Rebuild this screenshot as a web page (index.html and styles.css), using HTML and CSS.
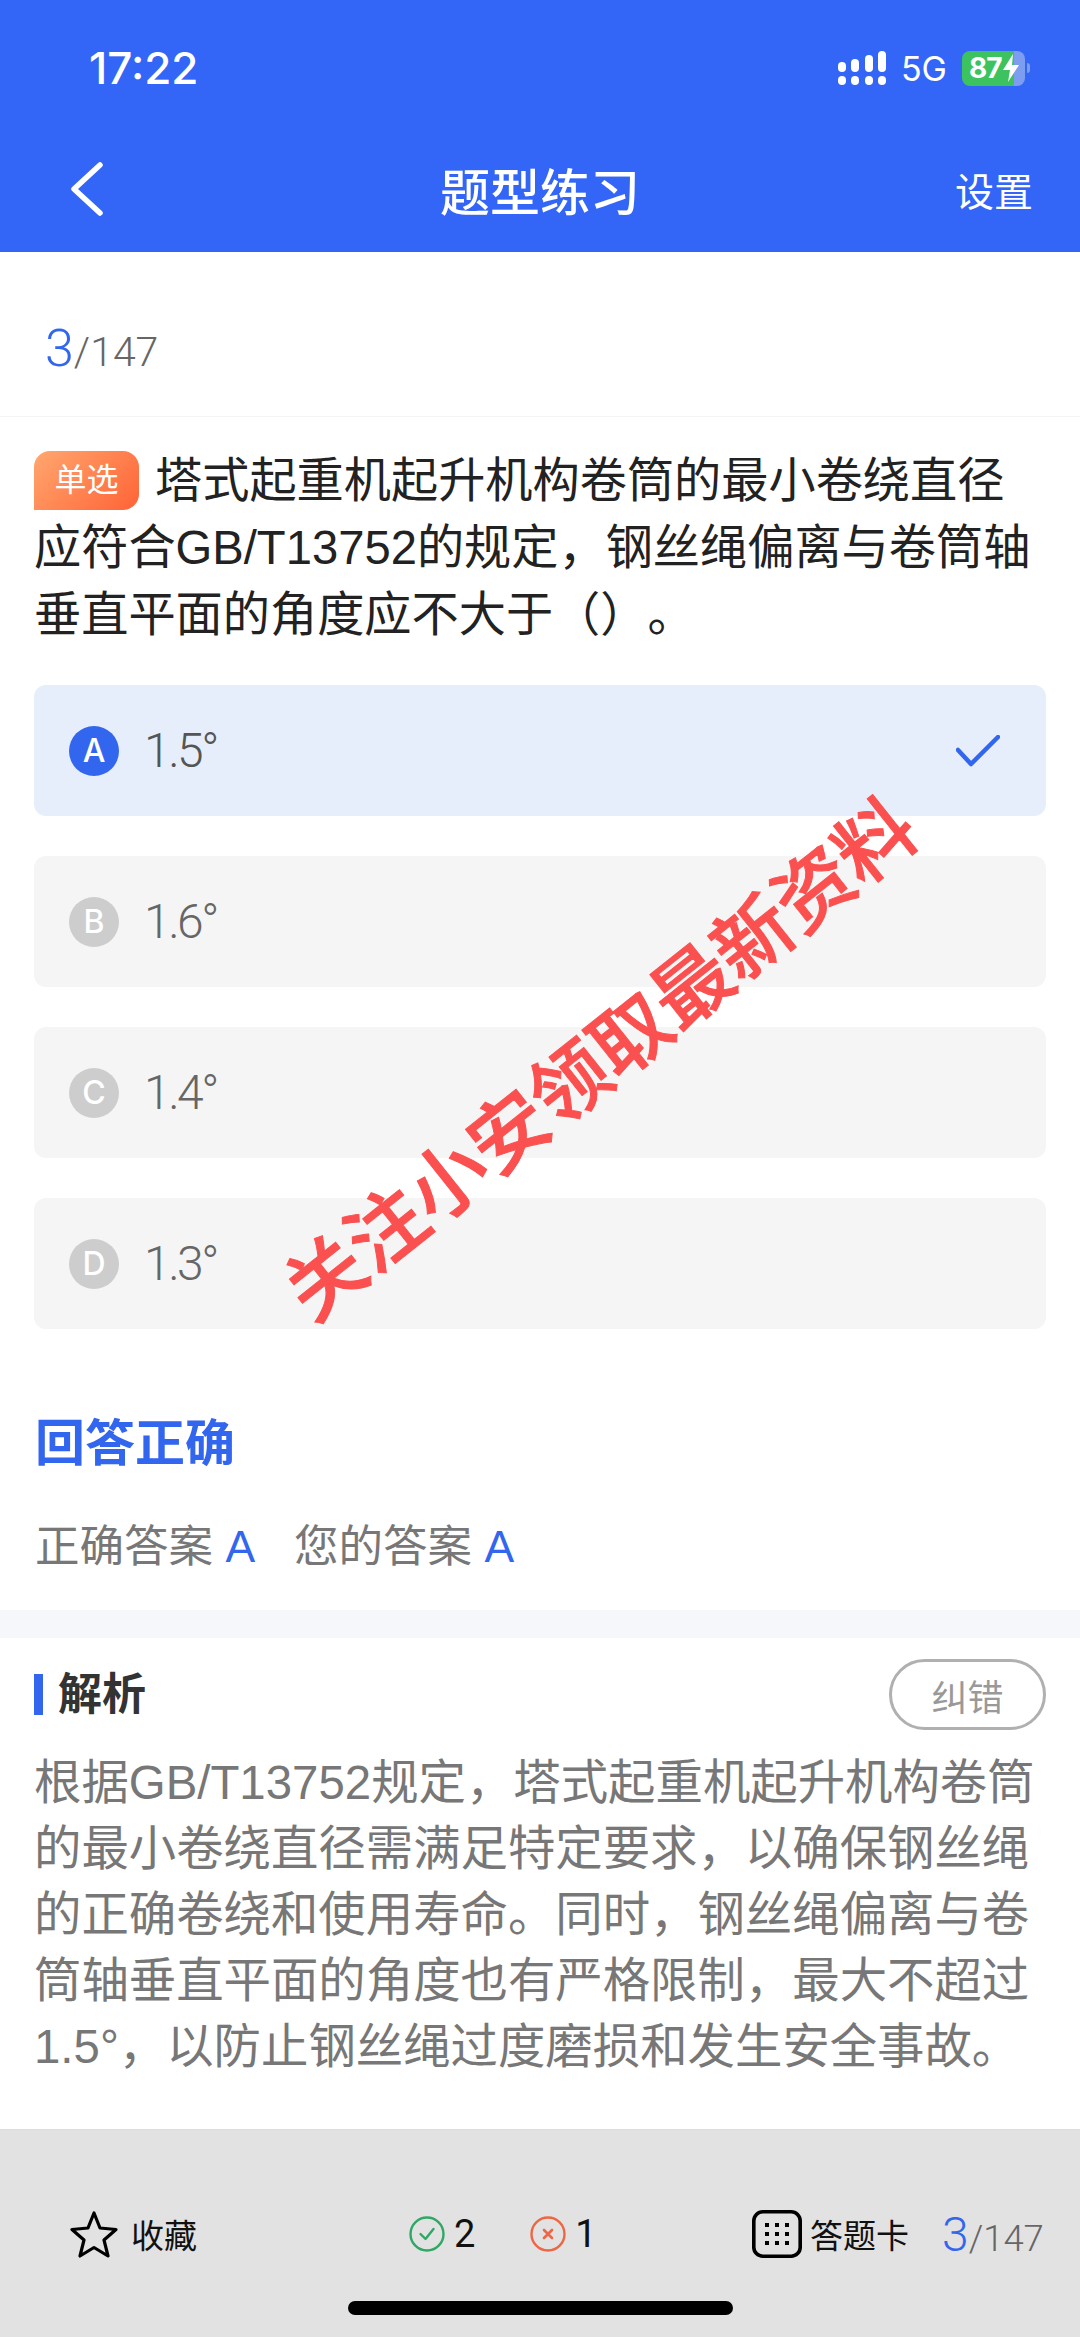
FILE: index.html
```html
<!DOCTYPE html>
<html lang="zh-CN">
<head>
  <meta charset="utf-8">
  <title>题型练习</title>
  <link rel="stylesheet" href="styles.css">
</head>
<body>
  <header class="top">
    <div class="status">
      <span class="time">17:22</span>
      <div class="status-right">
        <svg class="signal" width="48" height="34" viewBox="0 0 48 34" fill="#fff">
          <rect x="0" y="11" width="8" height="10" rx="4"/><rect x="13" y="8" width="8" height="13" rx="4"/><rect x="27" y="4" width="8" height="17" rx="4"/><rect x="40" y="0" width="8" height="21" rx="4"/>
          <rect x="0" y="25" width="8" height="9" rx="4"/><rect x="13" y="25" width="8" height="9" rx="4"/><rect x="27" y="25" width="8" height="9" rx="4"/><rect x="40" y="25" width="8" height="9" rx="4"/>
        </svg>
        <span class="net">5G</span>
        <div class="battery">
          <div class="battery-body">
            <span class="battery-num">87</span>
            <svg width="16" height="28" viewBox="0 0 16 28" fill="#fff"><path d="M10 0 L0 16 H7 L5 28 L16 11 H9 Z"/></svg>
          </div>
          <span class="battery-tip"></span>
        </div>
      </div>
    </div>
    <nav class="nav">
      <svg class="back" width="34" height="54" viewBox="0 0 34 54" fill="none" stroke="#fff" stroke-width="5.5" stroke-linecap="round" stroke-linejoin="round"><path d="M30 3 L4 27 L30 51"/></svg>
      <h1 class="nav-title">题型练习</h1>
      <span class="nav-set">设置</span>
    </nav>
  </header>

  <main class="content">
    <div class="counter"><span class="cur">3</span><span class="total">/147</span></div>

    <p class="question"><span class="tag">单选</span>塔式起重机起升机构卷筒的最小卷绕直径应符合GB/T13752的规定，钢丝绳偏离与卷筒轴垂直平面的角度应不大于（）。</p>

    <ul class="options">
      <li class="option picked">
        <span class="badge">A</span><span class="opt-text">1.5°</span>
        <svg class="tick" width="44" height="32" viewBox="0 0 44 32" fill="none" stroke="#3366ee" stroke-width="4.5" stroke-linecap="round" stroke-linejoin="round"><path d="M2 15 L15 29 L42 2"/></svg>
      </li>
      <li class="option"><span class="badge">B</span><span class="opt-text">1.6°</span></li>
      <li class="option"><span class="badge">C</span><span class="opt-text">1.4°</span></li>
      <li class="option"><span class="badge">D</span><span class="opt-text">1.3°</span></li>
    </ul>

    <section class="result">
      <h2 class="result-title">回答正确</h2>
      <p class="result-line">正确答案 <b>A</b><span class="mine">您的答案 <b>A</b></span></p>
    </section>

    <div class="band"></div>

    <section class="analysis">
      <div class="analysis-head">
        <h3 class="analysis-title">解析</h3>
        <span class="report">纠错</span>
      </div>
      <p class="analysis-text">根据GB/T13752规定，塔式起重机起升机构卷筒的最小卷绕直径需满足特定要求，以确保钢丝绳的正确卷绕和使用寿命。同时，钢丝绳偏离与卷筒轴垂直平面的角度也有严格限制，最大不超过1.5°，以防止钢丝绳过度磨损和发生安全事故。</p>
    </section>
  </main>

  <footer class="bottom">
    <div class="bottom-row">
      <div class="fav">
        <svg width="48" height="48" viewBox="0 0 48 48" fill="none" stroke="#000" stroke-width="3.2" stroke-linejoin="round"><path d="M24 3 L30 18 L46 19.5 L34 30 L38 46 L24 37.5 L10 46 L14 30 L2 19.5 L18 18 Z"/></svg>
        <span>收藏</span>
      </div>
      <div class="score">
        <svg width="36" height="36" viewBox="0 0 36 36" fill="none" stroke="#2fa865" stroke-width="2.4" stroke-linecap="round" stroke-linejoin="round"><circle cx="18" cy="18" r="16.5"/><path d="M11.5 18 L16.5 23 L24.5 13"/></svg>
        <span class="score-num">2</span>
        <svg class="score-x" width="36" height="36" viewBox="0 0 36 36" fill="none" stroke="#ee6644" stroke-width="2.4" stroke-linecap="round"><circle cx="18" cy="18" r="16.5"/><path d="M14 14 L22 22 M22 14 L14 22" stroke-width="2.6"/></svg>
        <span class="score-num">1</span>
      </div>
      <div class="card">
        <svg width="50" height="48" viewBox="0 0 50 48" fill="#000"><rect x="1.8" y="1.8" width="46.4" height="44.4" rx="9" fill="none" stroke="#000" stroke-width="3.6"/>
          <rect x="13" y="13" width="4" height="4"/><rect x="23" y="13" width="4" height="4"/><rect x="33" y="13" width="4" height="4"/>
          <rect x="13" y="22" width="4" height="4"/><rect x="23" y="22" width="4" height="4"/><rect x="33" y="22" width="4" height="4"/>
          <rect x="13" y="31" width="4" height="4"/><rect x="23" y="31" width="4" height="4"/><rect x="33" y="31" width="4" height="4"/></svg>
        <span>答题卡</span>
      </div>
      <div class="counter-small"><span class="cur">3</span><span class="total">/147</span></div>
    </div>
    <div class="home-bar"></div>
  </footer>

  <div class="watermark">关注小安领取最新资料</div>
</body>
</html>
```
FILE: styles.css
```css
* {
  box-sizing: border-box;
}

body {
  position: relative;
  display: flex;
  flex-direction: column;
  width: 1080px;
  height: 2337px;
  margin: 0;
  overflow: hidden;
  background: #fff;
  font-family: "Liberation Sans", "Noto Sans CJK SC", sans-serif;
  text-spacing-trim: space-all;
}

h1, h2, h3, p, ul {
  margin: 0;
  padding: 0;
}

/* header */
.top {
  height: 252px;
  background: #3366f6;
  color: #fff;
}

.status {
  display: flex;
  justify-content: space-between;
  align-items: center;
  height: 136px;
  padding: 0 50px 0 89px;
}

.time {
  font-family: Inter, sans-serif;
  font-size: 44px;
  font-weight: 500;
}

.status-right {
  display: flex;
  align-items: center;
}

.net {
  margin: 0 15px;
  font-family: Inter, sans-serif;
  font-size: 34px;
}

.battery {
  display: flex;
  align-items: center;
}

.battery-body {
  display: flex;
  align-items: center;
  gap: 1px;
  width: 63px;
  height: 35px;
  padding-left: 7px;
  border-radius: 8px;
  background: linear-gradient(90deg, #3cc35f 0, #3cc35f 83%, #7c9df0 83%);
}

.battery-num {
  font-family: Inter, sans-serif;
  font-size: 28px;
  font-weight: 700;
  letter-spacing: -1px;
}

.battery-tip {
  width: 3px;
  height: 10px;
  margin-left: 2px;
  border-radius: 0 3px 3px 0;
  background: #7c9df0;
}

.nav {
  display: flex;
  justify-content: space-between;
  align-items: center;
  position: relative;
  height: 106px;
  padding: 0 47px 0 70px;
}

.nav-title {
  position: absolute;
  left: 0;
  right: 0;
  text-align: center;
  font-size: 50px;
  font-weight: 500;
}

.nav-set {
  font-size: 39px;
}

/* question */
.content {
  flex: 1;
}

.counter {
  display: flex;
  align-items: baseline;
  height: 165px;
  padding: 66px 34px 0 45px;
  border-bottom: 1px solid #f5f5f5;
  font-family: Roboto, sans-serif;
  font-weight: 300;
}

.cur {
  color: #3366ee;
}

.total {
  color: #666;
}

.counter .cur {
  font-size: 52px;
}

.counter .total {
  font-size: 41px;
}

.question {
  padding: 30px 34px 0;
  font-size: 47.2px;
  line-height: 67px;
  color: #222;
}

.tag {
  display: inline-flex;
  justify-content: center;
  align-items: center;
  width: 105px;
  height: 59px;
  margin-right: 16px;
  border-radius: 16px 16px 16px 0;
  background: linear-gradient(135deg, #ffa76f, #ff6336);
  color: #fff;
  font-size: 32px;
  vertical-align: 6px;
  line-height: 59px;
}

.options {
  display: flex;
  flex-direction: column;
  gap: 40px;
  margin-top: 37px;
  padding: 0 34px;
  list-style: none;
}

.option {
  display: flex;
  align-items: center;
  height: 131px;
  padding: 0 46px 0 35px;
  border-radius: 12px;
  background: #f5f5f5;
  color: #666;
}

.option.picked {
  background: #e7eefb;
  color: #555;
}

.badge {
  display: flex;
  justify-content: center;
  align-items: center;
  width: 50px;
  height: 50px;
  margin-right: 25px;
  border-radius: 50%;
  background: #cdcdcd;
  color: #fff;
  font-family: Inter, sans-serif;
  font-size: 32px;
  font-weight: 500;
}

.picked .badge {
  background: #3366ee;
}

.opt-text {
  font-family: Roboto, sans-serif;
  font-size: 48px;
  font-weight: 300;
  letter-spacing: -2.5px;
}

.tick {
  margin-left: auto;
}

/* answer */
.result {
  height: 281px;
  padding: 79px 34px 0 35px;
}

.result-title {
  font-size: 50px;
  font-weight: 700;
  color: #3366ee;
  line-height: 72px;
}

.result-line {
  margin-top: 37px;
  font-size: 44.5px;
  line-height: 60px;
  color: #777;
}

.result-line b {
  font-weight: 400;
  color: #3366ee;
}

.mine {
  margin-left: 39px;
}

.band {
  height: 28px;
  background: #f5f7fa;
}

/* analysis */
.analysis {
  padding: 21px 34px 0;
}

.analysis-head {
  display: flex;
  justify-content: space-between;
  align-items: center;
}

.analysis-title {
  padding-left: 15px;
  border-left: 9px solid #3366ee;
  font-size: 44px;
  font-weight: 700;
  line-height: 41px;
  color: #333;
}

.report {
  display: flex;
  justify-content: center;
  align-items: center;
  width: 157px;
  height: 71px;
  border: 3px solid #b0b0b0;
  border-radius: 36px;
  color: #999;
  font-size: 36px;
}

.analysis-text {
  margin-top: 20px;
  font-size: 47.4px;
  line-height: 66px;
  color: #777;
}

/* bottom bar */
.bottom {
  position: relative;
  height: 208px;
  background: #e2e2e2;
  border-top: 1px solid #ddd;
}

.bottom-row {
  display: flex;
  align-items: center;
  height: 48px;
  margin-top: 80px;
  padding-left: 70px;
  color: #111;
  font-size: 33px;
}

.fav {
  display: flex;
  align-items: center;
  gap: 13px;
  width: 339px;
}

.score {
  display: flex;
  align-items: center;
  width: 343px;
}

.score-num {
  margin-left: 9px;
  font-family: Roboto, sans-serif;
  font-size: 38px;
}

.score-x {
  margin-left: 55px;
}

.card {
  display: flex;
  align-items: center;
  gap: 8px;
  width: 190px;
}

.counter-small {
  display: flex;
  align-items: baseline;
  font-family: Roboto, sans-serif;
  font-weight: 300;
}

.counter-small .cur {
  font-size: 48px;
}

.counter-small .total {
  font-size: 36.5px;
}

.home-bar {
  position: absolute;
  left: 348px;
  bottom: 22px;
  width: 385px;
  height: 14px;
  border-radius: 7px;
  background: #000;
}

/* watermark lies over the options */
.watermark {
  position: absolute;
  left: 211px;
  top: 1018px;
  width: 780px;
  text-align: center;
  transform: rotate(-38.5deg);
  font-size: 78px;
  font-weight: 500;
  line-height: 84px;
  color: #fb5050;
  -webkit-text-stroke: 1px #fb5050;
  white-space: nowrap;
}
```
